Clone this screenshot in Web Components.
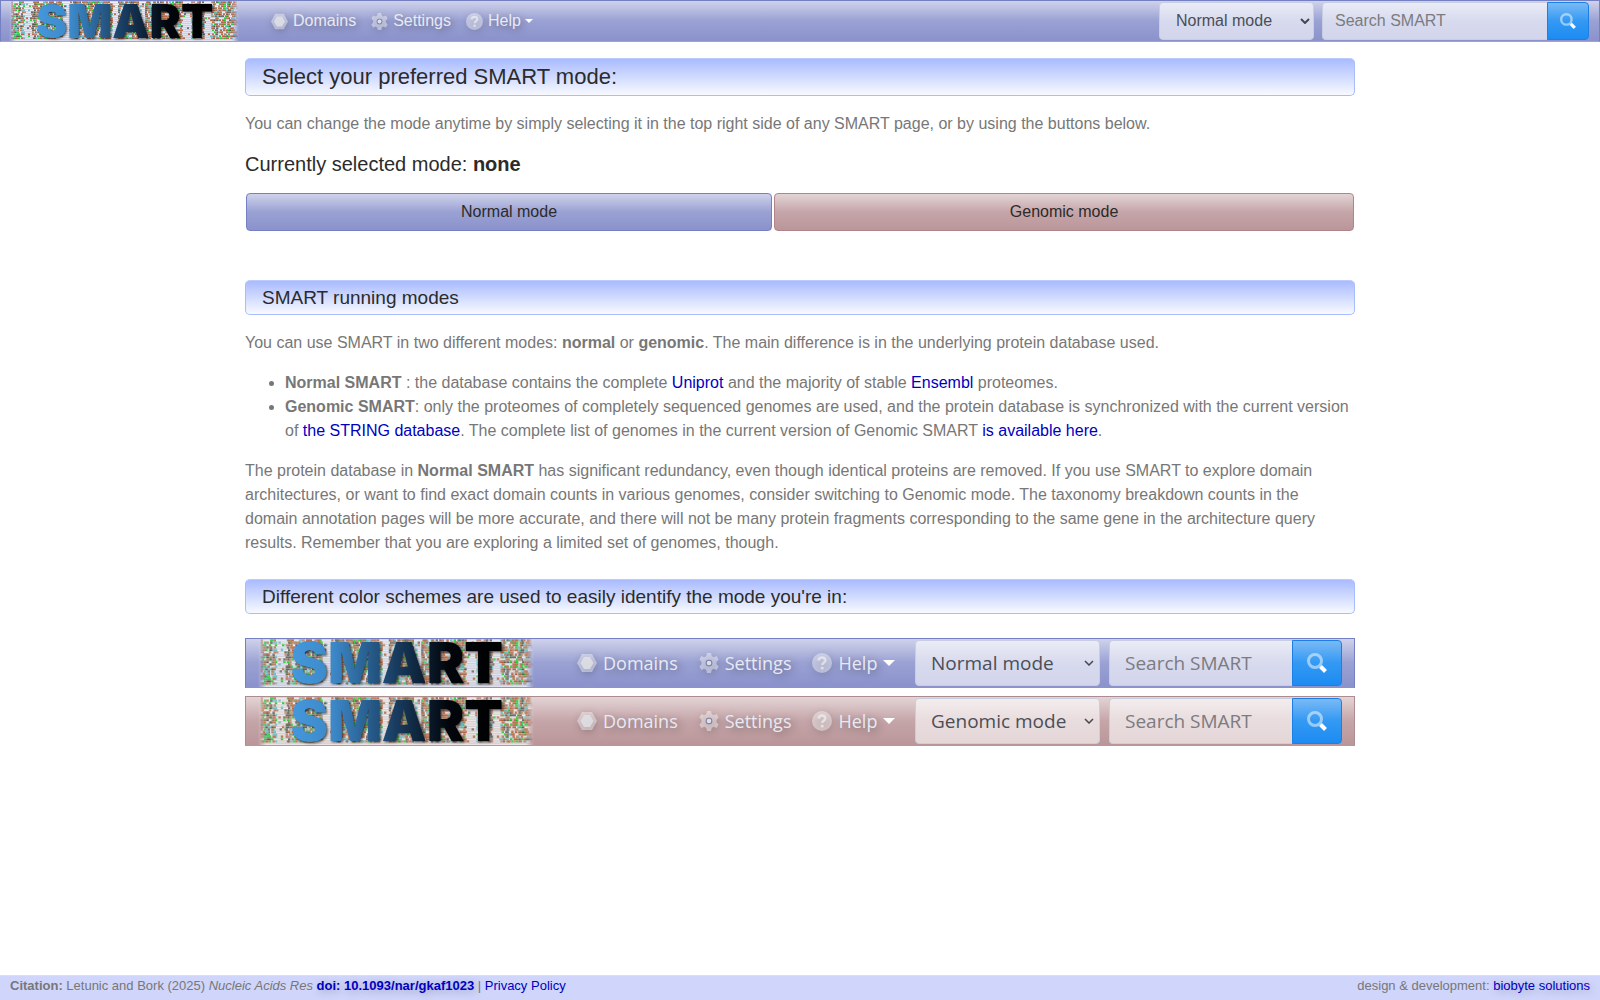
<!DOCTYPE html>
<html lang="en">
<head>
<meta charset="utf-8">
<meta name="viewport" content="width=device-width, initial-scale=1">
<title>SMART: Select mode</title>
<style>
    html {
        height: 100%;
    }
    body {
        margin: 0;
        min-height: 100%;
        display: flex;
        flex-direction: column;
        background: #fff;
        color: #777;
        font: 16px/24px "Liberation Sans", Arial, sans-serif;
    }
    main {
        box-sizing: border-box;
        width: 100%;
        max-width: 1110px;
        margin: 16px auto 24px;
    }
    p, ul {
        margin: 0 0 16px;
    }
    ul {
        padding-left: 40px;
    }
    a {
        color: #0000c0;
        text-decoration: none;
    }
    h2 {
        margin: 0 0 17px;
        font-size: 20px;
        font-weight: normal;
        line-height: 24px;
        color: #2b2b2b;
    }
    smart-bar[size="large"] {
        margin-top: 8px;
    }
    section {
        margin-top: 24px;
    }
</style>
</head>
<body>

<smart-bar label="SMART mode"></smart-bar>

<main>
    <smart-heading level="1">Select your preferred SMART mode:</smart-heading>
    <p>You can change the mode anytime by simply selecting it in the top right side of any SMART page, or by using the buttons below.</p>
    <h2>Currently selected mode: <b>none</b></h2>
    <mode-buttons></mode-buttons>

    <smart-heading>SMART running modes</smart-heading>
    <p>You can use SMART in two different modes: <b>normal</b> or <b>genomic</b>. The main difference is in the underlying protein database used.</p>
    <ul>
        <li><b>Normal SMART</b> : the database contains the complete <a href="#uniprot">Uniprot</a> and the majority of stable <a href="#ensembl">Ensembl</a> proteomes.</li>
        <li><b>Genomic SMART</b>: only the proteomes of completely sequenced genomes are used, and the protein database is synchronized with the current version of <a href="#string">the STRING database</a>. The complete list of genomes in the current version of Genomic SMART <a href="#genomes">is available here</a>.</li>
    </ul>
    <p>The protein database in <b>Normal SMART</b> has significant redundancy, even though identical proteins are removed. If you use SMART to explore domain architectures, or want to find exact domain counts in various genomes, consider switching to Genomic mode. The taxonomy breakdown counts in the domain annotation pages will be more accurate, and there will not be many protein fragments corresponding to the same gene in the architecture query results. Remember that you are exploring a limited set of genomes, though.</p>

    <section>
        <smart-heading>Different color schemes are used to easily identify the mode you're in:</smart-heading>
        <smart-bar size="large" label="Normal mode example" style="margin-top: 24px"></smart-bar>
        <smart-bar size="large" mode="genomic" label="Genomic mode example"></smart-bar>
    </section>
</main>

<smart-footer></smart-footer>

<script>
// Logo: the word over a coloured sequence alignment
class SmartLogo extends HTMLElement{

    constructor(){
        super();
        this.attachShadow({mode: "open"});
        this.shadowRoot.innerHTML = `
            <style>
            :host {
                display: block;
            }
            svg {
                display: block;
                width: 100%;
                height: 100%;
                overflow: visible;
            }
            text {
                font: 900 47px Inter, "Liberation Sans", Arial, sans-serif;
                fill: url(#ink);
                filter: drop-shadow(1px 1px 1px #000a);
            }
            </style>
            <svg viewBox="0 0 226 40" role="img" aria-label="SMART">
                <defs>
                    <linearGradient id="ink" gradientUnits="userSpaceOnUse" x1="26" y1="0" x2="200" y2="0">
                        <stop offset="0" stop-color="#4498dc"/>
                        <stop offset=".2" stop-color="#3c88c8"/>
                        <stop offset=".5" stop-color="#183c60"/>
                        <stop offset=".75" stop-color="#02060c"/>
                        <stop offset="1" stop-color="#000"/>
                    </linearGradient>
                    <linearGradient id="fade">
                        <stop offset="0" stop-color="#fff" stop-opacity="0"/>
                        <stop offset=".03" stop-color="#fff"/>
                        <stop offset=".97" stop-color="#fff"/>
                        <stop offset="1" stop-color="#fff" stop-opacity="0"/>
                    </linearGradient>
                    <mask id="sides" maskUnits="userSpaceOnUse" x="-2" y="0" width="230" height="40">
                        <rect x="-2" width="230" height="40" fill="url(#fade)"/>
                    </mask>
                </defs>
                <g mask="url(#sides)">
                    <rect x="-2" width="230" height="40" fill="#fff" fill-opacity=".72"/>
                    <g id="rows"></g>
                </g>
                <text x="25" y="37">SMART</text>
            </svg>`;
        this.drawRows(this.shadowRoot.querySelector("#rows"));
    }

    // Residues are packed in the conserved columns and sparse between them
    drawRows(group){
        const dense = [[0, 12], [21, 50], [61, 100], [107, 126], [134, 170], [180, 192], [200, 226]];
        const colors = ["#a9562a", "#12c422", "#5fb4b8", "#5a5450", "#b57a5e", "#b0653c"];
        const paths = colors.map(() => "");
        let seed = 41;
        const random = () => (seed = (seed * 16807) % 2147483647) / 2147483647;

        let lines = "";
        for(let y = 0; y < 39; y += 2){
            lines += `M-2 ${y}h230v1h-230z`;
            // each column leans to one colour, so that it reads as a vertical band
            for(let x = 0; x < 226; x += 1){
                const packed = dense.some(([from, to]) => x >= from && x <= to);
                if(y < 37 && random() < (packed ? .55 : .07)){
                    const lean = Math.floor(x * x / 7) % colors.length;
                    const i = random() < .4 ? lean : Math.floor(random() * colors.length);
                    paths[i] += `M${x} ${y}h2v2h-2z`;
                }
            }
        }
        group.innerHTML = `<path d="${lines}" fill="#7775"/>`
            + paths.map((d, i) => `<path d="${d}" fill="${colors[i]}" opacity=".85"/>`).join("")
            + `<path d="${lines}" fill="#fff4"/>`;
    }
}
customElements.define("smart-logo", SmartLogo);


const icons = {
    domains: `<path d="M5 1h10l5 9-5 9H5L0 10z" opacity=".42"/><path d="M7 4h6l3.500 6-3.500 6H7L3.500 10z" fill="#e0e0e6" opacity=".85"/>`,
    settings: `<path fill-rule="evenodd" opacity=".42" d="M8 0h4l.7 3 2 1.200L17.600 3l2 3.500L17.500 8.800v2.400l2.100 2.300-2 3.500-2.900-1.200-2 1.200-.7 3H8l-.7-3-2-1.200L2.400 17l-2-3.500 2.100-2.300V8.800L.4 6.500l2-3.500 2.900 1.200 2-1.200zM10 6.700a3.300 3.300 0 1 0 0 6.600 3.300 3.300 0 0 0 0-6.600z"/><circle cx="10" cy="10" r="3.200" fill="#7d82a4"/><circle cx="10" cy="10" r="2.300" fill="#dedfea"/>`,
    help: `<circle cx="10" cy="10" r="10" opacity=".42"/><path d="M6.500 7.500C7 5 8.300 4.500 10 4.500c2 0 3.300 1.200 3.300 2.900 0 2.300-3.100 2.300-3.100 4.600" fill="none" stroke="#fff" stroke-width="2.600" opacity=".5"/><circle cx="10.200" cy="15" r="1.600" opacity=".5"/>`
};

const barTemplate = document.createElement("template");
barTemplate.innerHTML = `
    <style>
    :host {
        --top: #cfd2eb;
        --middle: #9aa1d3;
        --bottom: #8b92cc;
        --edge: #747fc4;
        display: block;
    }
    :host([mode="genomic"]) {
        --top: #e3d4d5;
        --middle: #c5a5a9;
        --bottom: #ba9699;
        --edge: #ad8b8f;
    }
    * {
        box-sizing: border-box;
    }
    header {
        display: flex;
        align-items: center;
        height: 42px;
        padding: 0 10px;
        border: 1px solid var(--edge);
        border-bottom-color: #a4a5bd;
        background: linear-gradient(var(--top), var(--middle) 50%, var(--bottom));
    }
    smart-logo {
        width: 226px;
        height: 40px;
        flex: none;
    }
    nav {
        display: flex;
        gap: 15px;
        margin: 0 auto 0 34px;
    }
    nav a {
        display: flex;
        align-items: center;
        color: #e8e9f3;
        text-decoration: none;
        text-shadow: 2px 2px 8px #0006;
        white-space: nowrap;
    }
    nav svg {
        width: 17px;
        height: 17px;
        margin-right: 5px;
        fill: #fff;
        overflow: visible;
        filter: drop-shadow(1px 2px 4px #0005);
    }
    .caret {
        margin-left: 4px;
        border: 4px solid transparent;
        border-top-color: #fff;
        border-bottom: 0;
    }
    form {
        display: flex;
        align-items: center;
        margin: 0;
    }
    .mode {
        display: grid;
        position: relative;
        margin-right: 8px;
    }
    select, input {
        height: 38px;
        margin: 0;
        border: 1px solid #c8cde0;
        border-radius: 4px;
        background: #ffffff9c;
        font: inherit;
        color: #4a4e57;
    }
    select {
        width: 155px;
        padding: 0 16px;
        appearance: none;
    }
    .mode svg {
        position: absolute;
        right: 4px;
        top: 50%;
        width: 10px;
        height: 6px;
        margin-top: -3px;
        fill: none;
        stroke: #444950;
        stroke-width: 2;
        pointer-events: none;
    }
    input {
        width: 225px;
        padding: 0 12px;
        border-right: 0;
        border-radius: 4px 0 0 4px;
    }
    input::placeholder {
        color: #7b7b80;
        opacity: 1;
    }
    button {
        display: grid;
        place-items: center;
        width: 42px;
        height: 38px;
        padding: 0;
        border: 1px solid #1b80e6;
        border-radius: 0 4px 4px 0;
        background: linear-gradient(#7abaf6, #3399f3 50%, #1d8bf2);
    }
    button svg {
        width: 16px;
        height: 16px;
    }

    :host([size="large"]) {
        font-family: "Open Sans", "Noto Sans", sans-serif;
        font-size: 19px;
    }
    :host([size="large"]) header {
        height: 50px;
        padding: 0 12px;
        border-bottom-color: var(--bottom);
    }
    :host([size="large"]) smart-logo {
        width: 276px;
        height: 48px;
    }
    :host([size="large"]) nav {
        gap: 21px;
        margin-left: 43px;
        font-size: 18px;
    }
    :host([size="large"]) nav svg {
        width: 20px;
        height: 20px;
        margin-right: 6px;
    }
    :host([size="large"]) .caret {
        margin-left: 6px;
        border-width: 6px 6px 0;
    }
    :host([size="large"]) .mode {
        margin-right: 9px;
    }
    :host([size="large"]) select {
        width: 185px;
        height: 46px;
        padding: 0 15px;
    }
    :host([size="large"]) .mode svg {
        right: 6px;
        stroke-width: 1.500;
    }
    :host([size="large"]) input {
        width: 183px;
        height: 46px;
        padding: 0 15px;
    }
    :host([size="large"]) button {
        width: 50px;
        height: 46px;
    }
    :host([size="large"]) button svg {
        width: 20px;
        height: 20px;
    }
    </style>
    <header>
        <smart-logo></smart-logo>
        <nav>
            <a href="#domains"><svg viewBox="0 0 20 20">${icons.domains}</svg>Domains</a>
            <a href="#settings"><svg viewBox="0 0 20 20">${icons.settings}</svg>Settings</a>
            <a href="#help"><svg viewBox="0 0 20 20">${icons.help}</svg>Help<span class="caret"></span></a>
        </nav>
        <form>
            <div class="mode">
                <select>
                    <option value="normal">Normal mode</option>
                    <option value="genomic">Genomic mode</option>
                </select>
                <svg viewBox="0 0 10 6"><path d="M1 1l4 4 4-4"/></svg>
            </div>
            <input type="text" placeholder="Search SMART" aria-label="Search SMART">
            <button type="button" aria-label="Search">
                <svg viewBox="0 0 20 20" fill="none" stroke="#fff">
                    <circle cx="8" cy="8" r="6.500" stroke-width="3" opacity=".5"/>
                    <path d="M13.500 13.500l5 5" stroke-width="4"/>
                </svg>
            </button>
        </form>
    </header>
`;

// Navigation bar, coloured by mode
class SmartBar extends HTMLElement{

    constructor(){
        super();
        this.attachShadow({mode: "open"});
        this.shadowRoot.appendChild(barTemplate.content.cloneNode(true));
        this.select = this.shadowRoot.querySelector("select");
    }

    connectedCallback(){
        this.select.value = this.getAttribute("mode") || "normal";
        this.select.setAttribute("aria-label", this.getAttribute("label") || "Mode");
        this.select.onchange = () => this.setAttribute("mode", this.select.value);
    }

    disconnectedCallback(){
        this.select.onchange = null;
    }
}
customElements.define("smart-bar", SmartBar);


class SmartHeading extends HTMLElement{

    constructor(){
        super();
        this.attachShadow({mode: "open"});
        const tag = this.getAttribute("level") === "1" ? "h1" : "h3";
        this.shadowRoot.innerHTML = `
            <style>
            :host {
                display: block;
                margin-bottom: 16px;
            }
            h1, h3 {
                margin: 0;
                padding: 5px 16px;
                border: 1px solid #a9bcfb;
                border-top-color: #bccafc;
                border-radius: 5px;
                background: linear-gradient(#a9bbff, #f8faff);
                color: #2b2b2b;
                font-size: 19px;
                font-weight: normal;
                line-height: 23px;
            }
            h1 {
                font-size: 22px;
                line-height: 26px;
            }
            </style>
            <${tag}><slot></slot></${tag}>`;
    }
}
customElements.define("smart-heading", SmartHeading);


class ModeButtons extends HTMLElement{

    constructor(){
        super();
        this.attachShadow({mode: "open"});
        this.shadowRoot.innerHTML = `
            <style>
            :host {
                display: flex;
                gap: 2px;
                margin: 0 1px 49px;
            }
            button {
                flex: 526 1 0;
                height: 38px;
                padding: 0;
                border: 1px solid #747fc4;
                border-radius: 4px;
                background: linear-gradient(#cfd2eb, #9aa1d3 50%, #8b92cc);
                color: #2b2b2b;
                font: inherit;
            }
            button.genomic {
                flex-grow: 580;
                border-color: #b0848a;
                background: linear-gradient(#e3d4d5, #c5a5a9 50%, #ba9699);
            }
            </style>
            <button type="button">Normal mode</button>
            <button type="button" class="genomic">Genomic mode</button>`;
    }
}
customElements.define("mode-buttons", ModeButtons);


class SmartFooter extends HTMLElement{

    constructor(){
        super();
        this.attachShadow({mode: "open"});
        this.shadowRoot.innerHTML = `
            <style>
            :host {
                display: block;
                margin-top: auto;
            }
            footer {
                display: flex;
                justify-content: space-between;
                padding: 0 10px 5px;
                border-top: 1px solid #dcdde6;
                background: #d0d5fb;
                font-size: 13px;
                line-height: 19px;
            }
            a {
                color: #0000c0;
                text-decoration: none;
            }
            .shaded {
                text-shadow: 2px 2px 8px #0004;
            }
            </style>
            <footer>
                <span><b>Citation:</b> Letunic and Bork (2025) <i>Nucleic Acids Res</i> <a href="#doi" class="shaded"><b>doi: 10.1093/nar/gkaf1023</b></a> | <a href="#privacy">Privacy Policy</a></span>
                <span>design &amp; development: <a href="#biobyte" class="shaded">biobyte solutions</a></span>
            </footer>`;
    }
}
customElements.define("smart-footer", SmartFooter);
</script>
</body>
</html>
